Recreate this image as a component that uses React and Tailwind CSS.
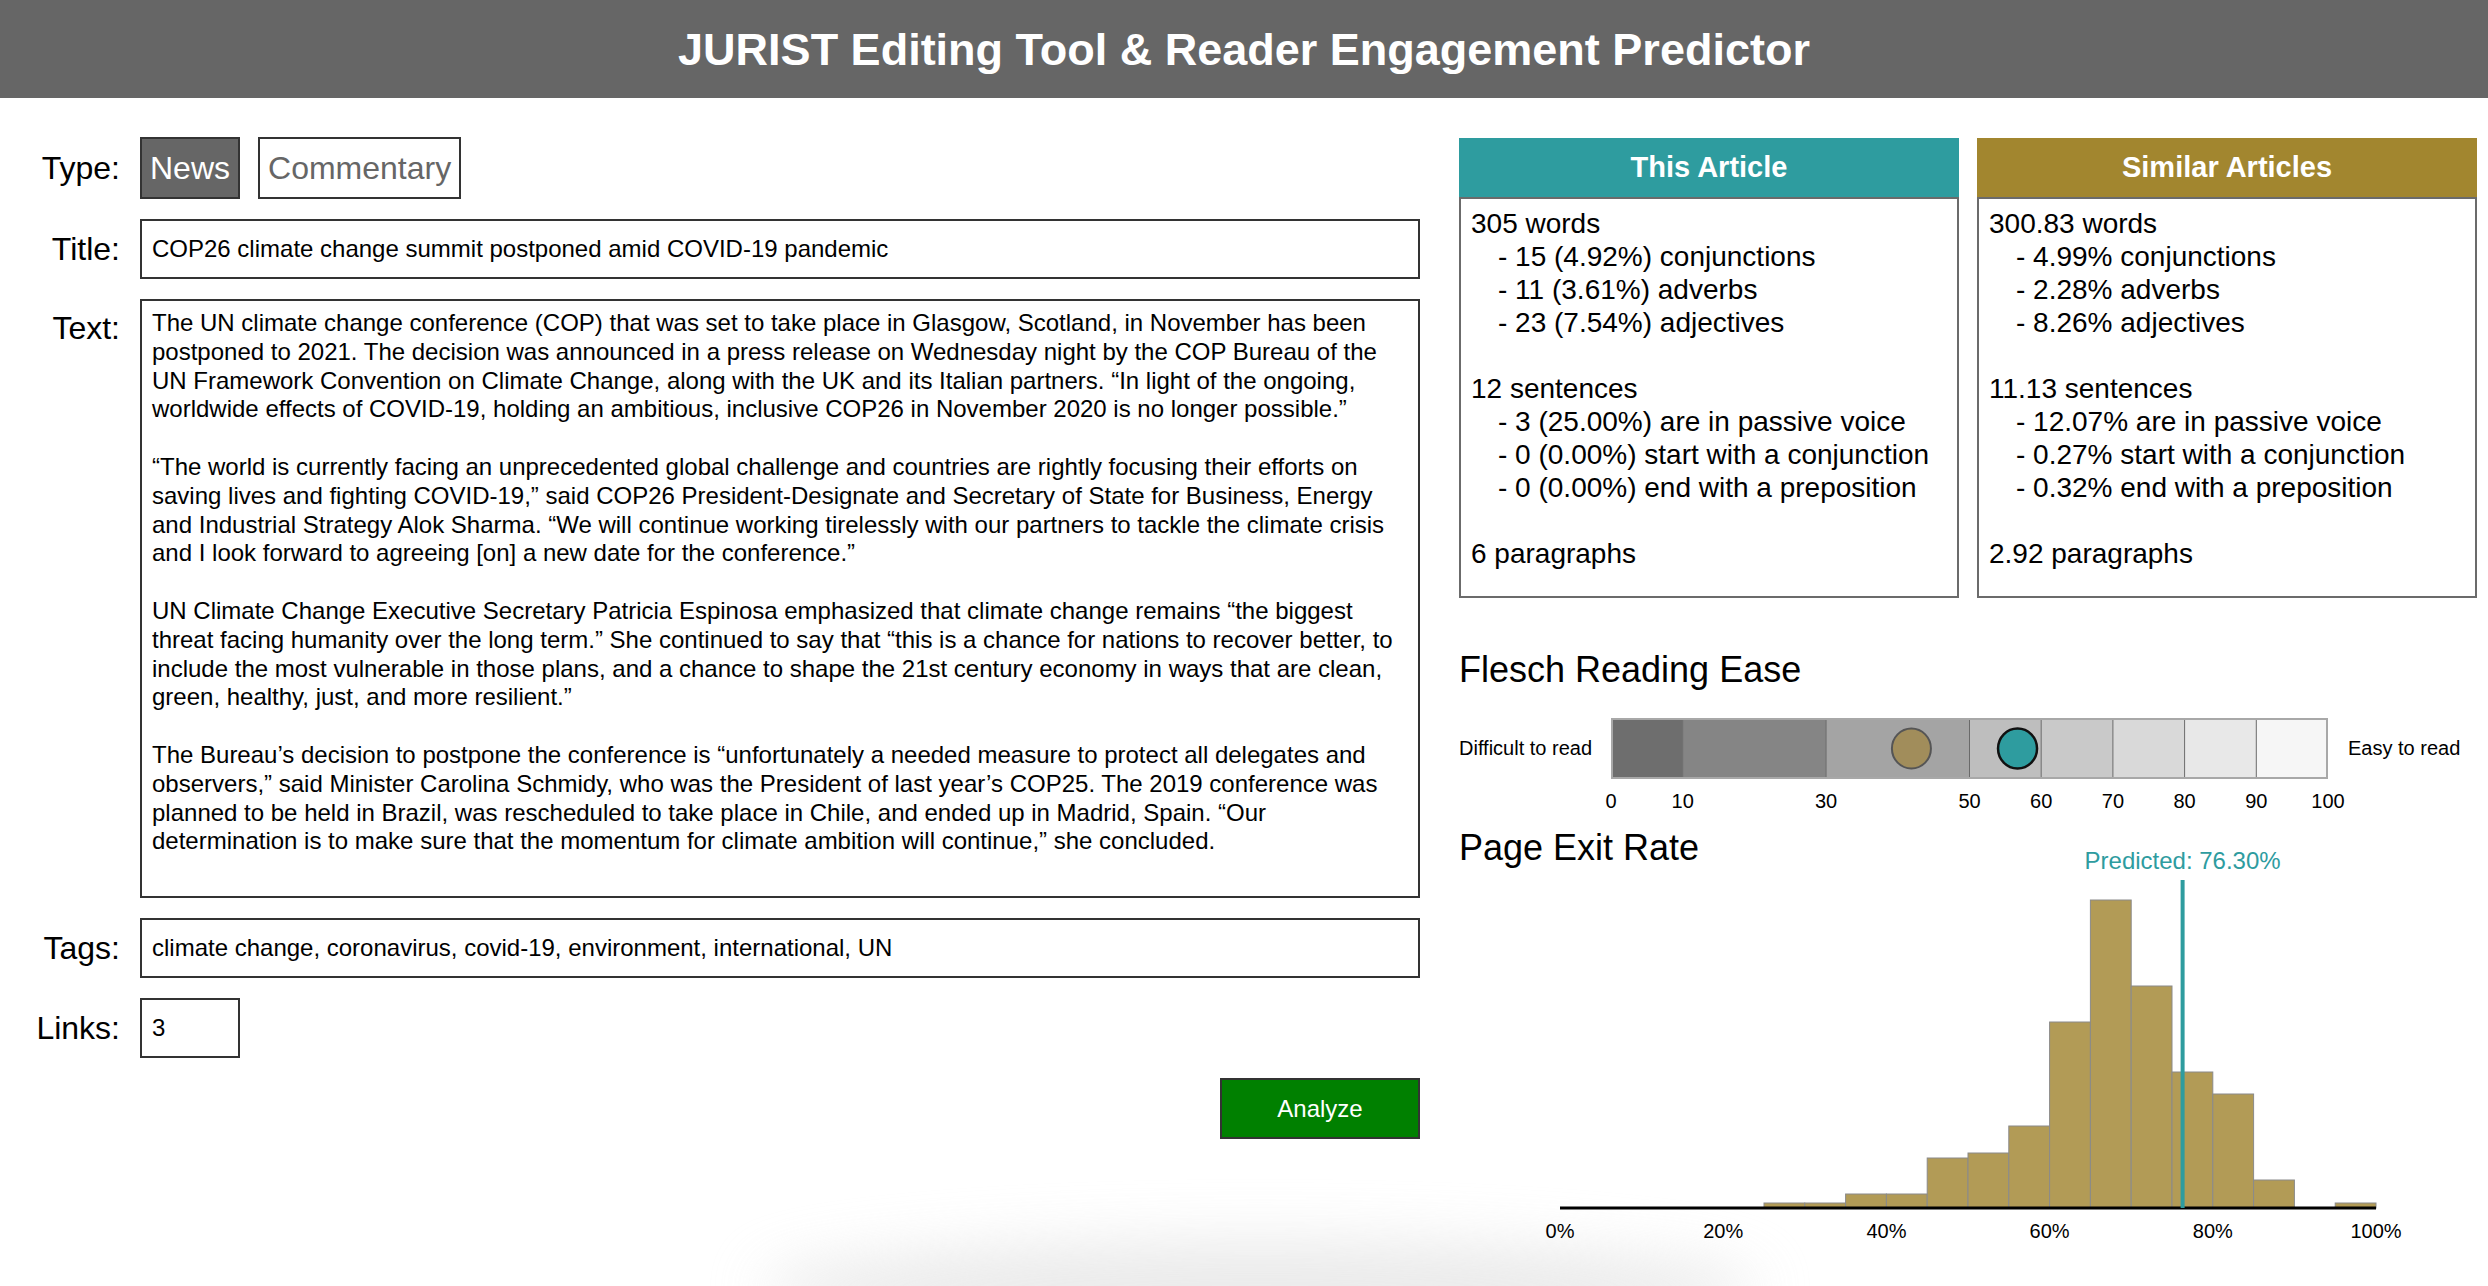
import React, { useState } from 'react';

const ARTICLE_TEXT = `The UN climate change conference (COP) that was set to take place in Glasgow, Scotland, in November has been postponed to 2021. The decision was announced in a press release on Wednesday night by the COP Bureau of the UN Framework Convention on Climate Change, along with the UK and its Italian partners. “In light of the ongoing, worldwide effects of COVID-19, holding an ambitious, inclusive COP26 in November 2020 is no longer possible.”

“The world is currently facing an unprecedented global challenge and countries are rightly focusing their efforts on saving lives and fighting COVID-19,” said COP26 President-Designate and Secretary of State for Business, Energy and Industrial Strategy Alok Sharma. “We will continue working tirelessly with our partners to tackle the climate crisis and I look forward to agreeing [on] a new date for the conference.”

UN Climate Change Executive Secretary Patricia Espinosa emphasized that climate change remains “the biggest threat facing humanity over the long term.” She continued to say that “this is a chance for nations to recover better, to include the most vulnerable in those plans, and a chance to shape the 21st century economy in ways that are clean, green, healthy, just, and more resilient.”

The Bureau’s decision to postpone the conference is “unfortunately a needed measure to protect all delegates and observers,” said Minister Carolina Schmidy, who was the President of last year’s COP25. The 2019 conference was planned to be held in Brazil, was rescheduled to take place in Chile, and ended up in Madrid, Spain. “Our determination is to make sure that the momentum for climate ambition will continue,” she concluded.`;

const thisArticle = [
  '305 words',
  '- 15 (4.92%) conjunctions',
  '- 11 (3.61%) adverbs',
  '- 23 (7.54%) adjectives',
  '',
  '12 sentences',
  '- 3 (25.00%) are in passive voice',
  '- 0 (0.00%) start with a conjunction',
  '- 0 (0.00%) end with a preposition',
  '',
  '6 paragraphs'
];

const similarArticles = [
  '300.83 words',
  '- 4.99% conjunctions',
  '- 2.28% adverbs',
  '- 8.26% adjectives',
  '',
  '11.13 sentences',
  '- 12.07% are in passive voice',
  '- 0.27% start with a conjunction',
  '- 0.32% end with a preposition',
  '',
  '2.92 paragraphs'
];

// flesch scale bands [from, to, fill]
const bands = [
  [0, 10, '#6e6e6e'],
  [10, 30, '#858585'],
  [30, 50, '#a4a4a4'],
  [50, 60, '#bebebe'],
  [60, 70, '#c9c9c9'],
  [70, 80, '#d9d9d9'],
  [80, 90, '#e8e8e8'],
  [90, 100, '#f6f6f6']
];
const ticks = [0, 10, 30, 50, 60, 70, 80, 90, 100];
const BAR_W = 717;
const unit = BAR_W / 100;

// histogram bins: start %, bar height px
const bins = [
  [25, 5], [30, 5], [35, 14], [40, 14], [45, 50], [50, 55], [55, 82],
  [60, 186], [65, 308], [70, 222], [75, 136], [80, 114], [85, 28], [95, 5]
];
const AX_X = 101;
const AX_Y = 376;
const PX = 8.16;
const predicted = 76.3;

const Label = ({ children, className = '' }) => (
  <div className={`w-[120px] shrink-0 text-right text-[32px] leading-[37px] text-black ${className}`}>
    {children}
  </div>
);

const StatBox = ({ title, color, lines }) => (
  <div className="w-[500px]">
    <div className={`h-[59px] flex items-center justify-center text-white font-bold text-[29px] ${color}`}>
      {title}
    </div>
    <div className="h-[401px] border-2 border-[#6b6b6b] pt-[8px] pl-[10px] text-[28px] leading-[33px] text-black">
      {lines.map((l, i) => (
        <div key={i} className={`h-[33px] whitespace-nowrap ${l.startsWith('-') ? 'pl-[27px]' : ''}`}>
          {l}
        </div>
      ))}
    </div>
  </div>
);

const FleschBar = ({ similar, current }) => (
  <div className="relative w-[717px] h-[61px]">
    <svg width={BAR_W} height="61" viewBox={`0 0 ${BAR_W} 61`} className="block">
      {bands.map(([a, b, fill]) => (
        <rect key={a} x={a * unit} y="0" width={(b - a) * unit} height="61" fill={fill} />
      ))}
      {bands.slice(1).map(([a]) => (
        <line key={a} x1={a * unit} y1="0" x2={a * unit} y2="61" stroke="#6a6a6a" strokeWidth="1" />
      ))}
      <rect x="1" y="1" width={BAR_W - 2} height="59" fill="none" stroke="#a8a8a8" strokeWidth="2" />
      <ellipse cx={similar * unit} cy="30.5" rx="19.5" ry="20" fill="#a18d5b" stroke="#555" strokeWidth="2" />
      <ellipse cx={current * unit} cy="30.5" rx="19.5" ry="20" fill="#2e9c9f" stroke="#111" strokeWidth="2.5" />
    </svg>
    {ticks.map((t) => (
      <span
        key={t}
        className="absolute top-[72px] -translate-x-1/2 text-[20px] leading-[23px] text-black"
        style={{ left: `${t * unit}px` }}
      >
        {t}
      </span>
    ))}
  </div>
);

const ExitChart = () => (
  <svg width="1029" height="420" viewBox="0 0 1029 420" className="block">
    {bins.map(([start, h]) => (
      <rect
        key={start}
        x={AX_X + start * PX}
        y={AX_Y - h}
        width={5 * PX}
        height={h}
        fill="#b29b56"
        stroke="#8a8a8a"
        strokeWidth="1"
      />
    ))}
    <line x1={AX_X} y1={AX_Y} x2={AX_X + 100 * PX} y2={AX_Y} stroke="#000" strokeWidth="3" />
    <line
      x1={AX_X + predicted * PX}
      y1="48"
      x2={AX_X + predicted * PX}
      y2={AX_Y}
      stroke="#2e9c9f"
      strokeWidth="4"
    />
    <text
      x={AX_X + predicted * PX}
      y="37"
      textAnchor="middle"
      fontSize="24"
      fill="#2e9c9f"
      fontFamily="'Liberation Sans', Arial, sans-serif"
    >
      Predicted: 76.30%
    </text>
    {[0, 20, 40, 60, 80, 100].map((p) => (
      <text
        key={p}
        x={AX_X + p * PX}
        y="406"
        textAnchor="middle"
        fontSize="20"
        fill="#000"
        fontFamily="'Liberation Sans', Arial, sans-serif"
      >
        {p}%
      </text>
    ))}
  </svg>
);

export default function App() {
  const [type, setType] = useState('News');
  const [title, setTitle] = useState('COP26 climate change summit postponed amid COVID-19 pandemic');
  const [text, setText] = useState(ARTICLE_TEXT);
  const [tags, setTags] = useState('climate change, coronavirus, covid-19, environment, international, UN');
  const [links, setLinks] = useState('3');

  const btn = (name) =>
    type === name
      ? 'bg-[#666666] text-white'
      : 'bg-white text-[#666666]';

  return (
    <div className="relative min-h-screen overflow-hidden bg-white font-['Liberation_Sans',Arial,sans-serif]">
      {/* faint shadow at the bottom edge, painted under the content */}
      <div className="pointer-events-none absolute bottom-[-50px] left-[760px] w-[1000px] h-[95px] rounded-[50%] bg-[#e2e2e2] blur-[28px] opacity-70" />

      <header className="relative h-[98px] bg-[#666666] flex items-center justify-center">
        <h1 className="text-white font-bold text-[45px] leading-none">
          JURIST Editing Tool &amp; Reader Engagement Predictor
        </h1>
      </header>

      <div className="relative flex pt-[39px]">
        {/* left: form */}
        <div className="w-[1420px] flex flex-col gap-5">
          <div className="flex items-center gap-5">
            <Label>Type:</Label>
            <div className="flex gap-[18px]">
              {['News', 'Commentary'].map((name) => (
                <button
                  key={name}
                  type="button"
                  onClick={() => setType(name)}
                  className={`h-[62px] px-[8px] border-2 border-[#333] text-[32px] leading-none ${btn(name)}`}
                >
                  {name}
                </button>
              ))}
            </div>
          </div>

          <div className="flex items-center gap-5">
            <Label>Title:</Label>
            <input
              value={title}
              onChange={(e) => setTitle(e.target.value)}
              className="w-[1280px] h-[60px] border-2 border-[#333] bg-white px-[10px] text-[24px] text-black outline-none"
            />
          </div>

          <div className="flex items-start gap-5">
            <Label className="mt-[11px]">Text:</Label>
            <textarea
              value={text}
              onChange={(e) => setText(e.target.value)}
              className="w-[1280px] h-[599px] border-2 border-[#333] bg-white pt-[8px] pl-[10px] pr-[10px] text-[24px] leading-[1.2] text-black resize-none outline-none"
            />
          </div>

          <div className="flex items-center gap-5">
            <Label>Tags:</Label>
            <input
              value={tags}
              onChange={(e) => setTags(e.target.value)}
              className="w-[1280px] h-[60px] border-2 border-[#333] bg-white px-[10px] text-[24px] text-black outline-none"
            />
          </div>

          <div className="flex items-center gap-5">
            <Label>Links:</Label>
            <input
              value={links}
              onChange={(e) => setLinks(e.target.value)}
              className="w-[100px] h-[60px] border-2 border-[#333] bg-white px-[10px] text-[24px] text-black outline-none"
            />
          </div>

          <div className="flex justify-end">
            <button
              type="button"
              className="w-[200px] h-[61px] bg-[#008000] border-2 border-[#333] text-white text-[24px]"
            >
              Analyze
            </button>
          </div>
        </div>

        {/* right: results */}
        <div className="ml-[39px] mt-[1px] w-[1018px] flex flex-col">
          <div className="flex gap-[18px]">
            <StatBox title="This Article" color="bg-[#2e9c9f]" lines={thisArticle} />
            <StatBox title="Similar Articles" color="bg-[#a2862f]" lines={similarArticles} />
          </div>

          <h2 className="mt-[51px] text-[36px] leading-[41px] text-black">Flesch Reading Ease</h2>

          <div className="mt-[28px] flex items-center">
            <span className="text-[20px] leading-[23px] text-black whitespace-nowrap">Difficult to read</span>
            <div className="ml-[19px]">
              <FleschBar similar={41.9} current={56.7} />
            </div>
            <span className="ml-[20px] text-[20px] leading-[23px] text-black whitespace-nowrap">Easy to read</span>
          </div>

          <div className="mt-[48px] grid">
            <h2 className="col-start-1 row-start-1 text-[36px] leading-[41px] text-black">Page Exit Rate</h2>
            <div className="col-start-1 row-start-1 pt-[5px]">
              <ExitChart />
            </div>
          </div>
        </div>
      </div>
    </div>
  );
}
